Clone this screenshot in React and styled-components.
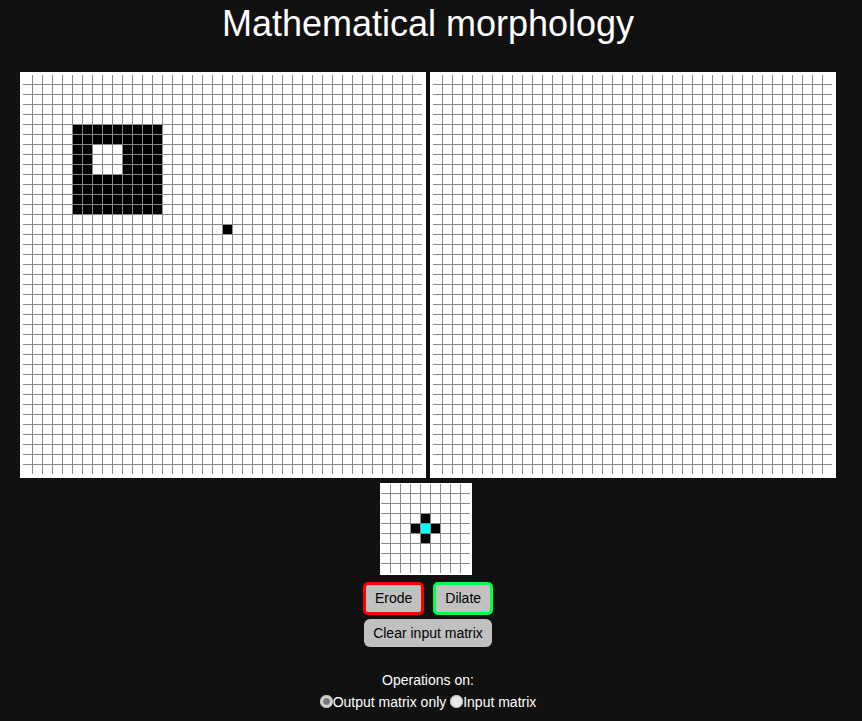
import React, { useState } from "react";
import styled, { createGlobalStyle } from "styled-components";

const SIZE = 40;
const KSIZE = 9;

function startMatrix() {
  const m = [];
  for (let r = 0; r < SIZE; r++) {
    const row = [];
    for (let c = 0; c < SIZE; c++) {
      const inRing = r >= 5 && r <= 13 && c >= 5 && c <= 13;
      const inHole = r >= 7 && r <= 9 && c >= 7 && c <= 9;
      row.push(inRing && !inHole ? 1 : 0);
    }
    m.push(row);
  }
  m[15][20] = 1;
  return m;
}

function emptyMatrix() {
  return Array.from({ length: SIZE }, () => Array(SIZE).fill(0));
}

// 0 = empty, 1 = set, 2 = origin
const kernel = Array.from({ length: KSIZE }, (_, r) =>
  Array.from({ length: KSIZE }, (_, c) => {
    if (r === 4 && c === 4) return 2;
    if ((r === 3 || r === 5) && c === 4) return 1;
    if ((c === 3 || c === 5) && r === 4) return 1;
    return 0;
  })
);

function App() {
  const [input, setInput] = useState(startMatrix);
  const [output] = useState(emptyMatrix);
  const [target, setTarget] = useState("output");

  const toggle = (r, c) => {
    setInput((m) => m.map((row, i) => row.map((v, j) => (i === r && j === c ? 1 - v : v))));
  };

  return (
    <>
      <GlobalStyle />
      <Main>
        <Title>Mathematical morphology</Title>

        <Panels>
          <Board>
            <Grid $n={SIZE}>
              {input.map((row, r) =>
                row.map((v, c) => <Cell key={r + "-" + c} $v={v} onClick={() => toggle(r, c)} />)
              )}
            </Grid>
          </Board>
          <Board>
            <Grid $n={SIZE}>
              {output.map((row, r) => row.map((v, c) => <Cell key={r + "-" + c} $v={v} />))}
            </Grid>
          </Board>
        </Panels>

        <KernelBox>
          <Grid $n={KSIZE}>
            {kernel.map((row, r) => row.map((v, c) => <Cell key={r + "-" + c} $v={v} />))}
          </Grid>
        </KernelBox>

        <ButtonRow $top={7}>
          <Button $ring="#ff0000">Erode</Button>
          <Button $ring="#00ff44">Dilate</Button>
        </ButtonRow>
        <ButtonRow $top={4}>
          <Button onClick={() => setInput(emptyMatrix())}>Clear input matrix</Button>
        </ButtonRow>

        <Options>
          <div>Operations on:</div>
          <div>
            <Radio
              type="radio"
              name="target"
              checked={target === "output"}
              onChange={() => setTarget("output")}
            />
            Output matrix only{" "}
            <Radio
              type="radio"
              name="target"
              checked={target === "input"}
              onChange={() => setTarget("input")}
            />
            Input matrix
          </div>
        </Options>
      </Main>
    </>
  );
}

export default App;

const GlobalStyle = createGlobalStyle`
  body {
    margin: 0;
    background: #111111;
    font-family: "Liberation Sans", Arial, sans-serif;
    color: #ffffff;
  }
`;

const Main = styled.div`
  width: 816px;
  margin-left: 20px;
  padding-top: 3px;
  display: flex;
  flex-direction: column;
  align-items: center;
`;

const Title = styled.h1`
  margin: 0;
  font-size: 36px;
  line-height: 41px;
  font-weight: normal;
  color: #ffffff;
`;

const Panels = styled.div`
  margin-top: 28px;
  display: flex;
  gap: 4px;
`;

const Board = styled.div`
  width: 406px;
  height: 406px;
  box-sizing: border-box;
  padding: 3px 4px 4px 3px;
  background: #ffffff;
`;

const Grid = styled.div`
  display: grid;
  grid-template-columns: repeat(${(p) => p.$n}, 9px);
  grid-auto-rows: 9px;
  gap: 1px;
  background: #888888;
  width: max-content;
`;

const Cell = styled.div`
  background: ${(p) => (p.$v === 2 ? "#00ffff" : p.$v === 1 ? "#000000" : "#ffffff")};
  cursor: pointer;
`;

const KernelBox = styled.div`
  margin-top: 5px;
  margin-right: 4px;
  padding: 1px 2px 2px 1px;
  background: #ffffff;
`;

const ButtonRow = styled.div`
  display: flex;
  gap: 9px;
  margin-top: ${(p) => p.$top}px;
`;

const Button = styled.button`
  font-family: "Liberation Sans", Arial, sans-serif;
  font-size: 14px;
  line-height: ${(p) => (p.$ring ? "17px" : "16px")};
  color: #000000;
  background: #c0c0c0;
  border: ${(p) => (p.$ring ? `3px solid ${p.$ring}` : "none")};
  border-radius: ${(p) => (p.$ring ? "5px" : "6px")};
  padding: ${(p) => (p.$ring ? "5px 9px" : "6px 9px")};
  cursor: pointer;
`;

const Options = styled.div`
  margin-top: 22px;
  font-size: 14px;
  line-height: 22px;
  text-align: center;
  color: #ffffff;
`;

const Radio = styled.input`
  appearance: none;
  width: 13px;
  height: 13px;
  margin: 0;
  border-radius: 50%;
  vertical-align: -1px;
  background: #e8e8e8;
  box-shadow: inset 0 0 0 1px #b5b5b5;

  &:checked {
    background: radial-gradient(circle, #7a7a7a 0 3px, #d6d6d6 4px);
  }
`;
